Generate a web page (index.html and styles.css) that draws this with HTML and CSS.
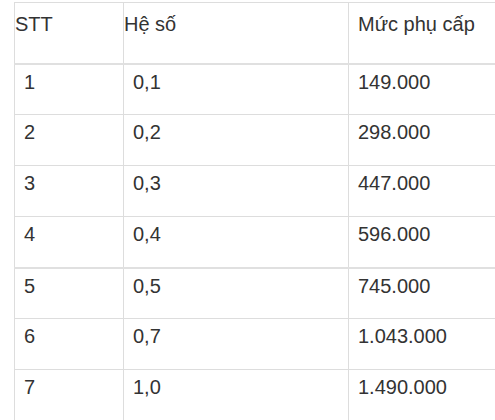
FILE: index.html
```html
<!DOCTYPE html>
<html lang="vi">
<head>
<meta charset="utf-8">
<link rel="stylesheet" href="styles.css">
</head>
<body>
<table class="tbl">
  <colgroup>
    <col class="c1">
    <col class="c2">
    <col class="c3">
  </colgroup>
  <tr class="head">
    <td class="h-flush">STT</td>
    <td class="h-flush">Hệ số</td>
    <td>Mức phụ cấp</td>
  </tr>
  <tr><td>1</td><td>0,1</td><td>149.000</td></tr>
  <tr><td>2</td><td>0,2</td><td>298.000</td></tr>
  <tr><td>3</td><td>0,3</td><td>447.000</td></tr>
  <tr class="thick"><td>4</td><td>0,4</td><td>596.000</td></tr>
  <tr><td>5</td><td>0,5</td><td>745.000</td></tr>
  <tr><td>6</td><td>0,7</td><td>1.043.000</td></tr>
  <tr><td>7</td><td>1,0</td><td>1.490.000</td></tr>
</table>
</body>
</html>
```

FILE: styles.css
```css
html, body {
  margin: 0;
  padding: 0;
  overflow: hidden;
  background: #fff;
}
body {
  font-family: "Liberation Sans", Arial, sans-serif;
  font-size: 20px;
  color: #333;
}
.tbl {
  border-collapse: collapse;
  margin: 2px 0 0 14px;
  width: 500px;
  table-layout: fixed;
}
.c1 { width: 109px; }
.c2 { width: 225px; }
.tbl td {
  border: 1px solid #dddddd;
  vertical-align: top;
  padding: 6px 9px 0 9px;
  height: 51px;
  box-sizing: border-box;
  line-height: 23px;
  white-space: nowrap;
}
.head td {
  height: 61px;
  padding-top: 10px;
  border-bottom: 2px solid #e0e0e0;
}
.head td.h-flush {
  padding-left: 0;
}
.thick td {
  border-bottom: 2px solid #e0e0e0;
}
```
